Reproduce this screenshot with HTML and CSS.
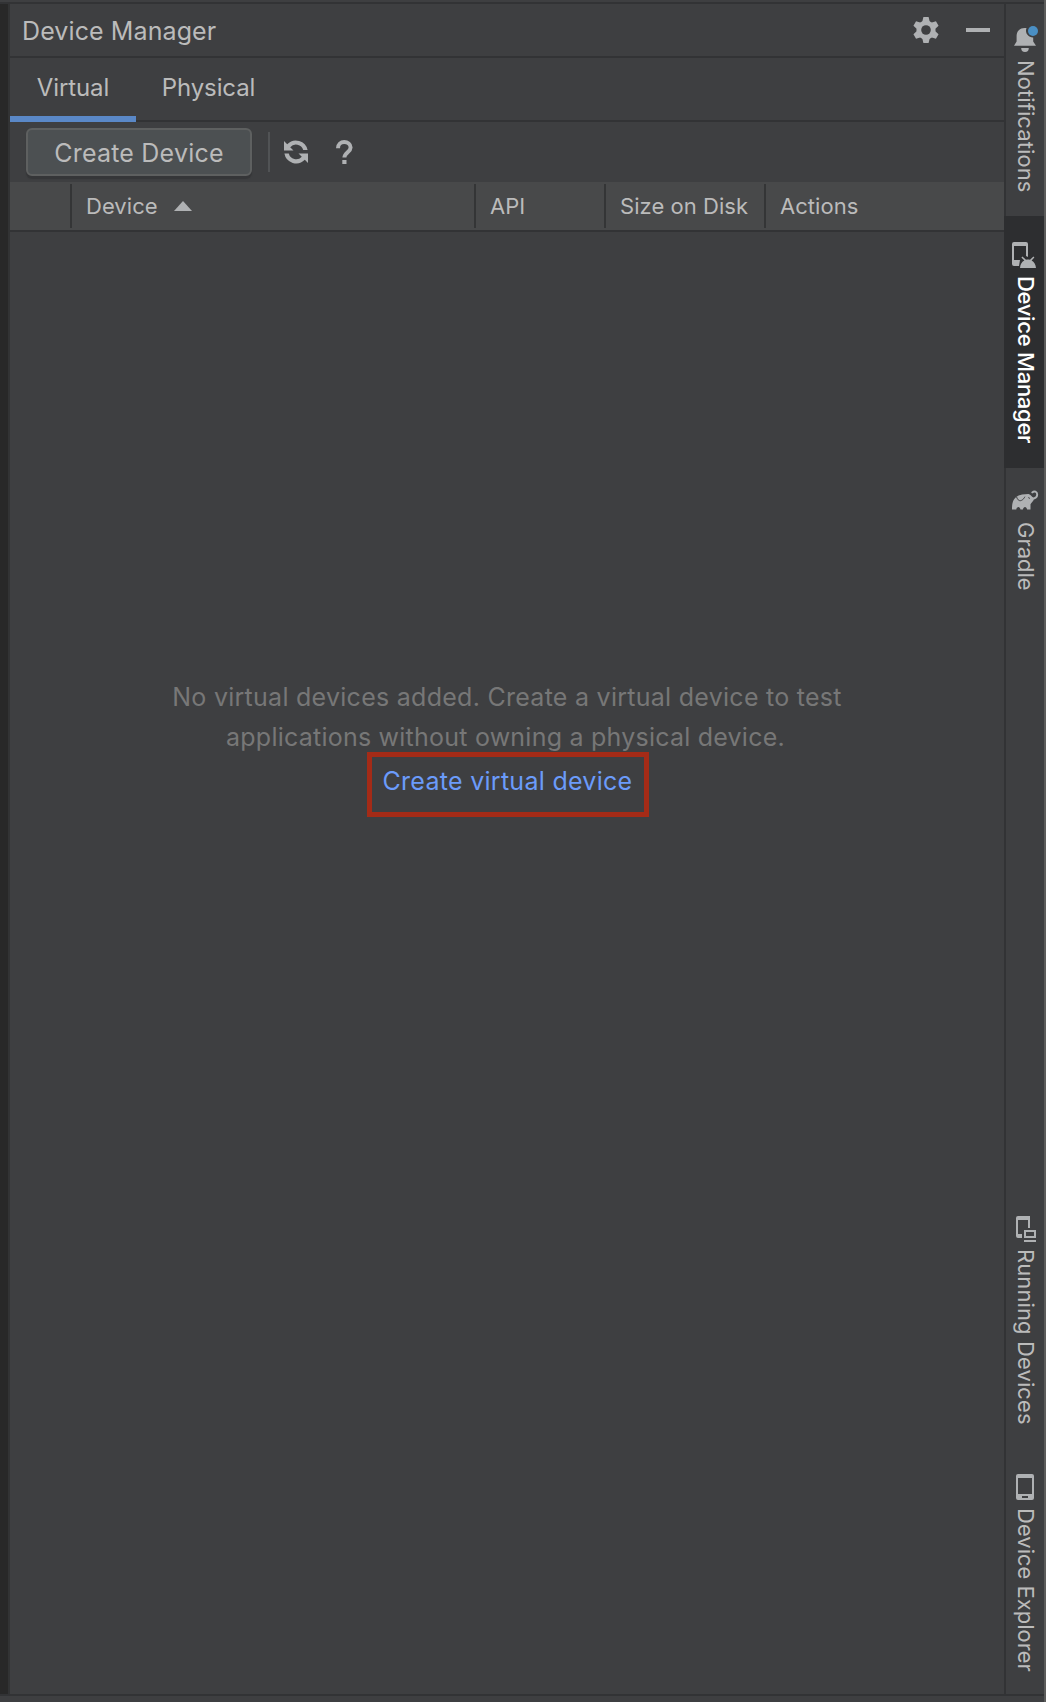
FILE: index.html
```html
<!DOCTYPE html>
<html lang="en">
<head>
<meta charset="utf-8">
<title>Device Manager</title>
<link rel="stylesheet" href="styles.css">
</head>
<body>
<div class="window">
  <div class="left-edge"></div>
  <main class="panel">
    <header class="title-bar">
      <h1 class="title">Device Manager</h1>
      <svg class="gear" width="26" height="26" viewBox="-13 -13 26 26"><g fill="#afb1b3"><circle r="9.6"/><g id="teeth"><path id="tooth" d="M-2.6-13h5.2l1.2 5h-7.6zM-2.6 13h5.2l1.2-5h-7.6z"/><use href="#tooth" transform="rotate(60)"/><use href="#tooth" transform="rotate(-60)"/></g></g><circle r="4.8" fill="#3e3f41"/></svg>
      <div class="minimize"></div>
    </header>
    <nav class="tabs">
      <div class="tab active"><span class="t-virtual">Virtual</span></div>
      <div class="tab"><span class="t-physical">Physical</span></div>
    </nav>
    <div class="toolbar">
      <button class="create">Create Device</button>
      <div class="divider"></div>
      <svg class="refresh" width="24" height="24" viewBox="0 0 24 24" fill="#afb1b3"><path d="M0 1v9.5h9.5L6.2 7.2A7.6 7.6 0 0 1 19.2 10H23.6A12 12 0 0 0 3.2 4.2z"/><path d="M24 23v-9.5h-9.5l3.3 3.3A7.6 7.6 0 0 1 4.8 13.5H.4A12 12 0 0 0 20.8 19.8z"/></svg>
      <svg class="help" width="18" height="24" viewBox="0 0 18 24"><path d="M2 8.2C2 4.2 4.800 2 8.200 2s6.400 2.100 6.400 5.500c0 4.400-6.200 5-6.200 10" fill="none" stroke="#afb1b3" stroke-width="4"/><path d="M6.300 20h4.200v4H6.300z" fill="#afb1b3"/></svg>
    </div>
    <div class="table-head">
      <div class="col c0"></div>
      <div class="col c1"><span class="t-device">Device</span><svg width="18" height="10" viewBox="0 0 18 10"><path d="M9 0l9 10H0z" fill="#afb1b3"/></svg></div>
      <div class="col c2"><span class="t-api">API</span></div>
      <div class="col c3"><span class="t-size">Size on Disk</span></div>
      <div class="col c4"><span class="t-actions">Actions</span></div>
    </div>
    <section class="empty">
      <p class="line l1">No virtual devices added. Create a virtual device to test</p>
      <p class="line l2">applications without owning a physical device.</p>
      <a class="link">Create virtual device</a>
    </section>
  </main>
  <aside class="sidebar">
    <div class="side notifications">
      <svg width="26" height="26" viewBox="0 0 26 26"><path d="M1 19.7L3.6 15.5V10C3.6 5 7 2 11.5 2h2A7 7 0 0 0 20.2 11.6V15.5L23 19.7z" fill="#afb1b3"/><path d="M8.2 22h7.6a3.8 4 0 0 1-7.6 0z" fill="#afb1b3"/><circle cx="20" cy="5" r="5" fill="#4a8fc4"/></svg>
      <span class="v v1">Notifications</span>
    </div>
    <div class="side manager">
      <svg width="26" height="28" viewBox="0 0 26 28" fill="#afb1b3"><path d="M2 0h12a2 2 0 0 1 2 2v13l-2-1V4H2v14h6l-1 6H2a2 2 0 0 1-2-2V2a2 2 0 0 1 2-2z"/><path d="M8 26c.3-4 2-6.200 4.400-7.400L9.400 15.600l1-1 3.600 3.200c1.300-.4 2.700-.4 4 0l3.400-3.200 1 1-2.800 3C22.200 20 23.700 22.500 24 26z"/></svg>
      <span class="v v2">Device Manager</span>
    </div>
    <div class="side gradle">
      <svg width="27" height="20" viewBox="0 0 27 20"><path d="M0 19.500C0 13 1 9 5 6.500 6.500 5.500 8 5 10 4.500L16.500 4c2.500.5 3.500 3 5.500 4.500C21.500 11.500 19.500 12.500 18.500 14.200V19.500h-3.400c-.5-3.500-3.700-3.500-4.200 0H8.500c-.5-3.500-3.700-3.500-4.200 0z" fill="#afb1b3"/><path d="M17 6.500C20.500 9.800 25.200 8.600 25.200 4.600 25.200 1.600 22.300.5 20.300 2.400" fill="none" stroke="#afb1b3" stroke-width="1.900" stroke-linecap="round"/><path d="M4.600 7c1.200 3.500 3.200 4.300 5 3.300 1.600-.8 2.700-2.300 3.300-3.600M16.300 7.600l1.600.8" fill="none" stroke="#3e3f41" stroke-width="1"/></svg>
      <span class="v v3">Gradle</span>
    </div>
    <div class="side running">
      <svg width="20" height="26" viewBox="0 0 20 26" fill="#afb1b3"><path d="M2 0h12v12h-2V4H2v14h4v4H2a2 2 0 0 1-2-2V2a2 2 0 0 1 2-2z"/><path d="M8 14h12v8H8zM10 16v4h8v-4zM8 24h12v2H8z" fill-rule="evenodd"/></svg>
      <span class="v v4">Running Devices</span>
    </div>
    <div class="side explorer">
      <svg width="18" height="26" viewBox="0 0 18 26"><path d="M2 0h14a2 2 0 0 1 2 2v22a2 2 0 0 1-2 2H2a2 2 0 0 1-2-2V2a2 2 0 0 1 2-2zM2 4v16h14V4zM6 22v2h6v-2z" fill="#afb1b3" fill-rule="evenodd"/></svg>
      <span class="v v5">Device Explorer</span>
    </div>
  </aside>
  <div class="right-edge"></div>
</div>
</body>
</html>
```
FILE: styles.css
```css
* { box-sizing: border-box; }
body { margin: 0; background: #3e3f41; color: #bbbbbb; font-family: Inter, "Liberation Sans", sans-serif; font-size: 25px; }
svg { display: block; flex: none; }
span, .line, .title, .link { white-space: nowrap; }
.window { display: grid; grid-template-columns: 10px 994px 40px 2px; height: 1702px; padding: 2px 0 6px; }
.left-edge { background: #282828; border-right: 2px solid #323334; border-top: 2px solid #323335; border-bottom: 2px solid #323335; }
.panel { display: flex; flex-direction: column; border-top: 2px solid #323335; border-bottom: 2px solid #323335; }
.title-bar { display: flex; align-items: center; height: 54px; padding: 0 14px 0 12px; border-bottom: 2px solid #323335; }
.title { margin: 0; padding-top: 2px; font-size: 25px; font-weight: 400; line-height: 30px; letter-spacing: 0.1px; flex: 1; }
.minimize { width: 24px; height: 4px; margin-left: 27px; background: #afb1b3; }
.tabs { display: flex; height: 64px; border-bottom: 2px solid #323335; font-size: 24px; letter-spacing: -0.1px; }
.tab { height: 64px; width: 126px; display: flex; justify-content: center; padding-top: 15px; line-height: 30px; }
.tab.active { border-bottom: 6px solid #5a88c7; }
.tab + .tab { width: 145px; }
.toolbar { display: flex; align-items: center; height: 60px; padding-left: 16px; }
.create { width: 226px; height: 48px; padding: 2px 0 0; border: 2px solid #5e6060; border-radius: 6px; background: #4c5052; color: #bbbbbb; font: inherit; letter-spacing: 0.2px; box-shadow: 0 3px 1px #353638; white-space: nowrap; }
.divider { width: 2px; height: 40px; margin: 0 14px 0 16px; background: #515355; }
.help { margin-left: 28px; }
.table-head { display: flex; align-items: center; height: 50px; background: #48494a; border-bottom: 2px solid #323335; font-size: 22px; letter-spacing: 0.05px; }
.col { display: flex; align-items: center; height: 44px; border-right: 2px solid #343536; padding-left: 14px; }
.c0 { width: 62px; }
.c1 { width: 404px; gap: 16px; }
.c2 { width: 130px; }
.c3 { width: 160px; }
.c4 { flex: 1; border: 0; }
.empty { display: flex; flex-direction: column; align-items: center; padding-top: 445px; color: #777777; }
.line { margin: 0; line-height: 40px; letter-spacing: 0.27px; }
.l2 { margin-left: -3px; letter-spacing: 0.23px; }
.link { width: 282px; height: 65px; margin: -5px 0 0 1px; border: 5px solid #a42b17; color: #6b9bfa; line-height: 49px; letter-spacing: 0.28px; text-align: center; }
.sidebar { display: flex; flex-direction: column; border: solid #323335; border-width: 2px 0 2px 2px; font-size: 22px; }
.side { display: flex; flex-direction: column; align-items: flex-start; }
.v { writing-mode: vertical-rl; line-height: 28px; }
.notifications { height: 212px; padding: 22px 0 0 7px; }
.v1 { margin: 8px 0 0 -1px; letter-spacing: 0.1px; }
.manager { height: 252px; margin-left: -2px; padding: 26px 0 0 8px; background: #2d2e30; color: #ffffff; }
.v2 { margin-top: 6px; font-weight: 500; letter-spacing: -0.3px; }
.gradle { padding: 22px 0 0 6px; }
.v3 { margin-top: 12px; }
.running { margin-top: auto; height: 258px; padding-left: 10px; }
.v4 { margin: 7px 0 0 -4px; letter-spacing: 0.1px; }
.explorer { height: 220px; padding-left: 10px; }
.v5 { margin: 8px 0 0 -4px; }
.right-edge { background: #5c5c5b; margin: -2px 0 -6px; }
```
